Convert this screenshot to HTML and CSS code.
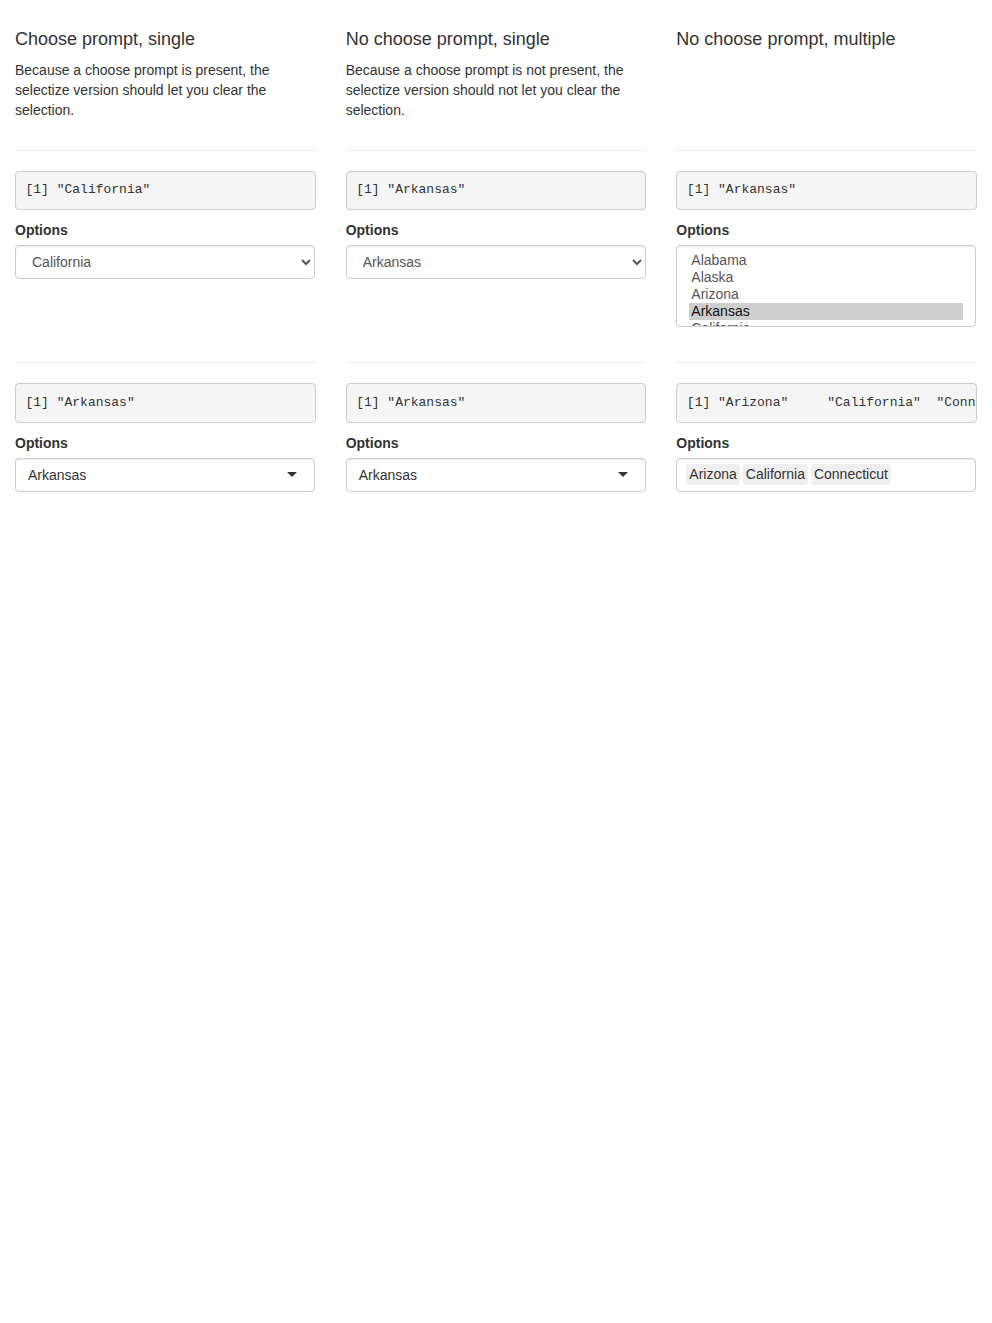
FILE: index.html
```html
<!DOCTYPE html>
<html>
<head>
<meta charset="utf-8">
<link rel="stylesheet" href="styles.css">
</head>
<body>
<div class="page">
  <div class="row">
    <div class="col">
      <h4 class="title">Choose prompt, single</h4>
      <p class="desc">Because a choose prompt is present, the selectize version should let you clear the selection.</p>
    </div>
    <div class="col">
      <h4 class="title">No choose prompt, single</h4>
      <p class="desc">Because a choose prompt is not present, the selectize version should not let you clear the selection.</p>
    </div>
    <div class="col">
      <h4 class="title">No choose prompt, multiple</h4>
    </div>
  </div>

  <div class="row">
    <div class="col">
      <hr class="rule">
      <pre class="out">[1] "California"</pre>
      <div class="group">
        <label class="lbl">Options</label>
        <select class="ctrl">
          <option value="">Choose a state:</option>
          <option>Alabama</option>
          <option>Alaska</option>
          <option>Arizona</option>
          <option>Arkansas</option>
          <option selected>California</option>
          <option>Colorado</option>
          <option>Connecticut</option>
        </select>
      </div>
    </div>
    <div class="col">
      <hr class="rule">
      <pre class="out">[1] "Arkansas"</pre>
      <div class="group">
        <label class="lbl">Options</label>
        <select class="ctrl">
          <option>Alabama</option>
          <option>Alaska</option>
          <option>Arizona</option>
          <option selected>Arkansas</option>
          <option>California</option>
          <option>Colorado</option>
          <option>Connecticut</option>
        </select>
      </div>
    </div>
    <div class="col">
      <hr class="rule">
      <pre class="out">[1] "Arkansas"</pre>
      <div class="group">
        <label class="lbl">Options</label>
        <select class="ctrl multi" multiple>
          <option>Alabama</option>
          <option>Alaska</option>
          <option>Arizona</option>
          <option selected>Arkansas</option>
          <option>California</option>
          <option>Colorado</option>
          <option>Connecticut</option>
        </select>
      </div>
    </div>
  </div>

  <div class="row">
    <div class="col">
      <hr class="rule">
      <pre class="out">[1] "Arkansas"</pre>
      <div class="group">
        <label class="lbl">Options</label>
        <div class="sel-input single">
          <span class="sel-text">Arkansas</span>
          <span class="caret"></span>
        </div>
      </div>
    </div>
    <div class="col">
      <hr class="rule">
      <pre class="out">[1] "Arkansas"</pre>
      <div class="group">
        <label class="lbl">Options</label>
        <div class="sel-input single">
          <span class="sel-text">Arkansas</span>
          <span class="caret"></span>
        </div>
      </div>
    </div>
    <div class="col">
      <hr class="rule">
      <pre class="out">[1] "Arizona"     "California"  "Connecticut"</pre>
      <div class="group">
        <label class="lbl">Options</label>
        <div class="sel-input multi-items">
          <span class="item">Arizona</span>
          <span class="item">California</span>
          <span class="item">Connecticut</span>
        </div>
      </div>
    </div>
  </div>
</div>
</body>
</html>
```

FILE: styles.css
```css
* { box-sizing: border-box; }
html, body { margin: 0; padding: 0; background: #fff; }
body {
  font-family: "Liberation Sans", Arial, Helvetica, sans-serif;
  font-size: 14px;
  line-height: 1.42857143;
  color: #333;
}
.page { padding: 20px 15px 0 15px; }
.row {
  display: grid;
  grid-template-columns: repeat(3, minmax(0, 1fr));
  column-gap: 30px;
}
.col { min-width: 0; }
.title {
  font-size: 18px;
  font-weight: 500;
  line-height: 1.1;
  margin: 10px 0 10px 0;
}
.desc { margin: 0 0 10px 0; }
.rule {
  margin: 20px 0;
  border: 0;
  border-top: 1px solid #eee;
  height: 0;
}
.out {
  display: block;
  margin: 0 0 10px 0;
  padding: 9.5px;
  font-family: "Liberation Mono", "Courier New", monospace;
  font-size: 13px;
  line-height: 1.42857143;
  color: #333;
  background: #f5f5f5;
  border: 1px solid #ccc;
  border-radius: 4px;
  white-space: pre;
  overflow: hidden;
}
.group {
  width: 300px;
  max-width: 100%;
  margin-bottom: 15px;
}
.lbl {
  display: inline-block;
  max-width: 100%;
  margin-bottom: 5px;
  font-weight: bold;
}
.ctrl {
  display: block;
  width: 100%;
  height: 34px;
  padding: 6px 12px;
  font-family: inherit;
  font-size: 14px;
  line-height: 1.42857143;
  color: #555;
  background-color: #fff;
  border: 1px solid #ccc;
  border-radius: 4px;
  box-shadow: inset 0 1px 1px rgba(0,0,0,.075);
}
.ctrl.multi {
  height: auto;
  scrollbar-width: none;
}
.sel-input {
  position: relative;
  display: flex;
  align-items: center;
  width: 100%;
  height: 34px;
  padding: 6px 12px;
  color: #333;
  background: #fff;
  border: 1px solid #ccc;
  border-radius: 4px;
  box-shadow: inset 0 1px 1px rgba(0,0,0,.075);
  overflow: hidden;
}
.sel-text { line-height: 20px; }
.caret {
  position: absolute;
  top: 50%;
  right: 17px;
  margin-top: -3px;
  width: 0;
  height: 0;
  border-style: solid;
  border-width: 5px 5px 0 5px;
  border-color: #333 transparent transparent transparent;
}
.multi-items {
  align-items: flex-start;
  padding: 5px 9px 0 9px;
}
.item {
  display: block;
  margin: 0 3px 0 0;
  padding: 1px 3px;
  line-height: 19px;
  background: #efefef;
  color: #333;
  border-radius: 3px;
}
```
